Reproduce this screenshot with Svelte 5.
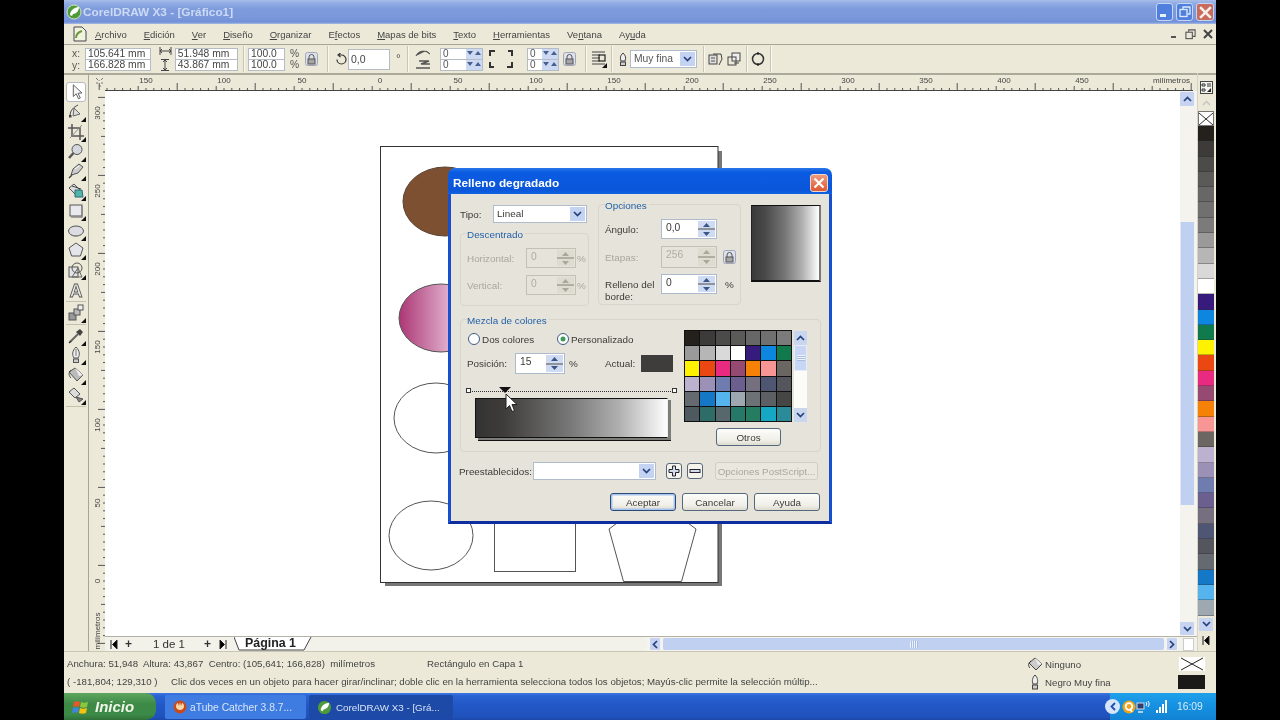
<script>
  const menu = [['A','rchivo'],['E','dición'],['V','er'],['D','iseño'],['O','rganizar'],['E','f','ectos'],['M','apas de bits'],['T','exto'],['H','erramientas'],['Ve','n','tana'],['Ay','u','da']];
  const tools = [
    {s:'<path d="M7 2v13l3.2-3 2.6 5.6 2-1-2.500-5.200 4.300-.3z" fill="#f6f6f6" stroke="#555"/>',a:1},
    {s:'<path d="M4 14C4 8 8 5 12 3" fill="none" stroke="#444"/><path d="M8 6l-1 8 7-2z" fill="#ddd" stroke="#666"/><rect x="3" y="13" width="2.500" height="2.500" fill="#444"/>',f:1},
    {s:'<path d="M6 2v12h12M2 6h12v12" fill="none" stroke="#555" stroke-width="1.500"/><path d="M4 16L16 3" stroke="#888"/>',f:1},
    {s:'<circle cx="11" cy="7.500" r="5" fill="#d4d7de" stroke="#555"/><path d="M7.500 11l-4.500 5" stroke="#555" stroke-width="2.400"/>',f:1},
    {s:'<path d="M5 14l2-6 6-5 4 3-5 6z" fill="#ccc" stroke="#555"/><path d="M3 17l3-3" stroke="#444" stroke-width="1.500"/><path d="M9 8l4-3" stroke="#fff"/>',f:1},
    {s:'<path d="M3 7l5-4 6 6-5 4z" fill="#ddd" stroke="#555"/><path d="M9 9l7 0 1 7-8 0z" fill="#4fb6a8" stroke="#367"/><path d="M6 5l9 3" stroke="#444"/>',f:1},
    {s:'<rect x="4" y="4" width="12" height="11" fill="#e8e8ee" stroke="#555"/><path d="M16 5v11H5" stroke="#888" fill="none" stroke-width="1.400"/>',f:1},
    {s:'<ellipse cx="10" cy="10" rx="7.500" ry="5" fill="#dcdce4" stroke="#555"/><path d="M5 14c4 2 9 1 12-2" stroke="#888" fill="none"/>',f:1},
    {s:'<path d="M10 3l7 5-2.600 8H5.600L3 8z" fill="#e4e4ea" stroke="#555"/>',f:1},
    {s:'<rect x="3" y="7" width="9" height="10" fill="#e4e4e4" stroke="#555"/><circle cx="11" cy="8" r="5" fill="none" stroke="#555"/><path d="M6 17l6-9 4 9z" fill="none" stroke="#666"/>',f:1},
    {s:'<text x="10" y="17" text-anchor="middle" font-family="Liberation Sans" font-weight="bold" font-size="18" fill="#e8e8e8" stroke="#555" stroke-width=".8">A</text>'},
    {s:'<rect x="3" y="10" width="7" height="7" fill="#999" stroke="#555"/><rect x="8" y="6" width="6" height="6" fill="#bbb" stroke="#555"/><rect x="12" y="2" width="5" height="5" fill="#eee" stroke="#555"/>',f:1},
    {s:'<path d="M4 16l8-8" stroke="#666" stroke-width="2"/><path d="M10 6l4-3 3 3-3 4z" fill="#444"/><path d="M3 17l2-2" stroke="#333" stroke-width="1.500"/>',f:1},
    {s:'<path d="M10 2c4 4 4 8 2 11H8C6 10 6 6 10 2z" fill="#eee" stroke="#555"/><path d="M10 4v7" stroke="#777"/><rect x="7.500" y="14" width="5" height="3.500" fill="#ccc" stroke="#555"/>',f:1},
    {s:'<path d="M3 7l6-4 8 7-6 6z" fill="#bbb" stroke="#555"/><path d="M5 5C2 8 3 11 5 13" stroke="#444" fill="none"/><path d="M9 3l8 7-4 1z" fill="#eee"/>',f:1},
    {s:'<path d="M3 7l5-4 6 6-5 4z" fill="#ddd" stroke="#555"/><path d="M10 12l7 2-4 3z" fill="#888" stroke="#555"/>',f:1},
  ];
  const sepAfter = [10, 11, 15];
  const swatches = ['#24211d','#3c3b39','#4b4b4a','#5a5a59','#676767','#707070','#7b7b7b','#9a9a9a','#b6b6b6','#d9d9d9','#ffffff','#361a7c','#0d86e0','#107a4c','#fff200','#ea4712','#e82a80','#964a72','#f58206','#f89696','#6b6661','#bcb2d0','#9b91b6','#6f7cb0','#6b5f90','#74707f','#4f5674','#55555e','#646a70','#1578c6','#55b4ee','#9ea8b0','#6d7276','#5c6064','#464644','#4e5a60','#2e6c68','#56686c','#267868','#267c60','#14a8c4','#2a8a98'];
  const side = swatches.slice(0, 32);
  const hmarks = [];
  for (let v = -150; v <= 450; v += 50) hmarks.push(v);
  const hticks = [];
  for (let x = 380 - 7.8 * 36; x < 1193; x += 7.8) hticks.push(x);
  const vmarks = [300,250,200,150,100,50,0];
  const vticks = [];
  for (let y = 581 - 7.8 * 62; y < 651; y += 7.8) vticks.push(y);
  const tickLen = (i) => i % 10 === 0 ? 7 : i % 5 === 0 ? 4 : 2;
</script>

{#snippet chev(up, color = '#26407c')}
  <svg class="chev" viewBox="0 0 9 6" width="9" height="6"><path d={up ? 'M1 5l3.500-3.500L8 5' : 'M1 1l3.500 3.500L8 1'} fill="none" stroke={color} stroke-width="1.700"/></svg>
{/snippet}
{#snippet side_chev(left)}
  <svg class="chev" viewBox="0 0 6 9" width="6" height="9"><path d={left ? 'M5 1L1.500 4.500 5 8' : 'M1 1l3.500 3.500L1 8'} fill="none" stroke="#26407c" stroke-width="1.700"/></svg>
{/snippet}
{#snippet spin(val, cls = '')}
  <div class="spin {cls}">
    <span class="val">{val}</span>
    <span class="arrows">
      <span class="ar"><svg viewBox="0 0 7 4" width="7" height="4"><path d="M3.500 0L7 4H0z"/></svg></span>
      <span class="ar"><svg viewBox="0 0 7 4" width="7" height="4"><path d="M0 0h7L3.500 4z"/></svg></span>
    </span>
  </div>
{/snippet}
{#snippet mini(val)}
  <div class="mini"><span>{val}</span><span class="ma"><svg viewBox="0 0 16 5" width="16" height="5"><path d="M1 0h6L4 4zM9 4l3-4 3 4z" fill="#4a5f90"/></svg></span></div>
{/snippet}
{#snippet lock()}
  <svg class="lock" viewBox="0 0 13 14" width="13" height="14"><rect x=".5" y=".5" width="12" height="13" rx="2" fill="#dfe1ea" stroke="#a0a7b8"/><path d="M4 7V5a2.500 2.500 0 015 0v2" fill="none" stroke="#555"/><rect x="3" y="7" width="7" height="5" fill="#a6a6a6" stroke="#555"/></svg>
{/snippet}
{#snippet group_label(t)}
  <span class="legend">{t}</span>
{/snippet}

<div class="screen">
  <div class="desk">
    <header class="title">
      <svg class="logo" viewBox="0 0 16 16" width="16" height="16"><circle cx="8" cy="8" r="7" fill="#4f9a3a"/><circle cx="8" cy="8" r="7" fill="none" stroke="#d5e6b5"/><path d="M4 11C4 7 8 3 13 3c0 4-3 7-6 7l-1 2z" fill="#fff"/></svg>
      <span class="title-text">CorelDRAW X3 - [Gráfico1]</span>
      <span class="wbtns">
        <span class="wb"><i class="min"></i></span>
        <span class="wb"><svg viewBox="0 0 12 12" width="12" height="12"><rect x="1" y="3.500" width="7" height="7" fill="none" stroke="#dfe8fa" stroke-width="1.300"/><path d="M4 3V1h7v7H8.500" fill="none" stroke="#dfe8fa" stroke-width="1.300"/></svg></span>
        <span class="wb close"><svg viewBox="0 0 12 12" width="13" height="13"><path d="M1 1l10 10M11 1L1 11" stroke="#f6eee8" stroke-width="2.400"/></svg></span>
      </span>
    </header>

    <nav class="menu">
      <svg class="doc" viewBox="0 0 14 16" width="14" height="16"><path d="M1 1h8l4 4v10H1z" fill="#f2f3dc" stroke="#445"/><path d="M3 12c0-4 3-6 6-7" stroke="#6a9a40" fill="none" stroke-width="2"/></svg>
      {#each menu as m}
        <span class="mi">{#if m[2]}{m[0]}<u>{m[1]}</u>{m[2]}{:else}<u>{m[0]}</u>{m[1]}{/if}</span>
      {/each}
      <span class="mdi">
        <i class="mdmin"></i>
        <svg viewBox="0 0 12 12" width="11" height="11"><rect x="1" y="3.500" width="7" height="7" fill="none" stroke="#555" stroke-width="1.200"/><path d="M4 3V1h7v7H8.500" fill="none" stroke="#555" stroke-width="1.200"/></svg>
        <svg viewBox="0 0 10 10" width="10" height="10"><path d="M1 1l8 8M9 1L1 9" stroke="#444" stroke-width="2"/></svg>
      </span>
    </nav>

    <div class="prop">
      <div class="g g1">
        <div class="xy"><span>x:</span><span class="inp tall">105.641 mm</span><span>y:</span><span class="inp tall">166.828 mm</span></div>
        <div class="dims">
          <svg viewBox="0 0 13 8" width="13" height="8"><path d="M1 0v8M12 0v8M1 4h11M3 2L1 4l2 2M10 2l2 2-2 2" stroke="#444" fill="none"/></svg>
          <svg viewBox="0 0 8 12" width="8" height="12"><path d="M0 .5h8M0 11.500h8M4 0v12M2 3l2-2 2 2M2 9l2 2 2-2" stroke="#444" fill="none"/></svg>
        </div>
        <div class="stack w67"><span class="inp tall">51.948 mm</span><span class="inp tall">43.867 mm</span></div>
      </div>
      <i class="sep s1"></i>
      <div class="g g2">
        <div class="stack w38"><span class="inp tall">100.0</span><span class="inp tall">100.0</span></div>
        <div class="pct"><span>%</span><span>%</span></div>
        <span class="lockw">{@render lock()}</span>
      </div>
      <i class="sep s2"></i>
      <div class="g g3">
        <svg viewBox="0 0 12 12" width="12" height="12"><path d="M2 6.500a4.500 4.500 0 104.500-4.500H4M5.500 0L3 2l2.500 2" fill="none" stroke="#333" stroke-width="1.200"/></svg>
        <span class="inp angle">0,0</span>
        <span class="deg">°</span>
      </div>
      <i class="sep s3"></i>
      <div class="g g4">
        <div class="mirror">
          <svg viewBox="0 0 16 8" width="16" height="8"><path d="M1 7C3 2 10 0 15 5l-4-3" fill="#555" stroke="#555"/></svg>
          <svg viewBox="0 0 16 9" width="16" height="9"><path d="M4 1h10L6 4h9M1 8h14" fill="none" stroke="#555" stroke-width="1.500"/></svg>
        </div>
        <div class="stack w43">{@render mini('0')}{@render mini('0')}</div>
      </div>
      <div class="g g5">
        <svg viewBox="0 0 24 18" width="24" height="18"><path d="M1 6V1h5M23 6V1h-4M1 12v5h4M23 12v5h-5" fill="none" stroke="#333" stroke-width="2"/></svg>
      </div>
      <div class="g g6">
        <div class="stack w43">{@render mini('0')}{@render mini('0')}</div>
        <span class="lockw2">{@render lock()}</span>
      </div>
      <i class="sep s4"></i>
      <div class="g g7">
        <svg viewBox="0 0 16 18" width="16" height="18"><path d="M1 2h13M1 5h8M1 8h8M1 11h8M1 14h13" stroke="#444"/><rect x="8" y="5" width="6" height="6" fill="none" stroke="#222" stroke-width="1.200"/><path d="M16 18h-5l5-5z" fill="#111"/></svg>
      </div>
      <i class="sep s5"></i>
      <div class="g g8">
        <svg viewBox="0 0 8 14" width="8" height="14"><path d="M4 1c3 3 3 5 2 8H2C1 6 1 4 4 1z" fill="#eee" stroke="#444"/><rect x="1.500" y="10" width="5" height="3.500" fill="#ccc" stroke="#444"/></svg>
        <div class="combo pen"><span class="ctext">Muy fina</span><span class="cbtn">{@render chev(false)}</span></div>
      </div>
      <i class="sep s6"></i>
      <div class="g g9">
        <svg viewBox="0 0 15 14" width="15" height="14"><rect x="1" y="3" width="8" height="9" fill="#ddd" stroke="#444"/><path d="M5 2h8l1 5-3 6" fill="none" stroke="#444"/><path d="M3 6h4M3 9h4" stroke="#555"/></svg>
        <svg viewBox="0 0 15 14" width="15" height="14"><rect x="5" y="1" width="8" height="8" fill="#eee" stroke="#444"/><rect x="1" y="5" width="8" height="8" fill="none" stroke="#444"/><path d="M7 11h5" stroke="#444"/></svg>
      </div>
      <i class="sep s7"></i>
      <div class="g g10">
        <svg viewBox="0 0 14 14" width="14" height="14"><circle cx="7" cy="7" r="5.500" fill="none" stroke="#333" stroke-width="1.500"/><circle cx="7" cy="1.500" r="1.200" fill="#222"/><circle cx="7" cy="12.500" r="1.200" fill="#222"/></svg>
      </div>
      <i class="sep s8"></i>
    </div>

    <div class="work">
      <aside class="tools">
        {#each tools as t, i}
          <div class="tool" class:active={t.a}>
            <svg viewBox="0 0 20 20" width="20" height="20">{@html t.s}{#if t.f}<path d="M20 20h-5l5-5z" fill="#111"/>{/if}</svg>
          </div>
          {#if sepAfter.includes(i)}<hr class="tsep"/>{/if}
        {/each}
      </aside>

      <div class="center">
        <svg class="hruler" viewBox="89 73 1108 18" width="1108" height="18">
          <path d="M99 80v1M96 83h2M101 83h2M100 85v2M96 78l2 2M103 78l-2 2" stroke="#777"/>
          {#each hticks as x, i}
            <line x1={x} x2={x} y1={90 - tickLen(i)} y2="90" stroke="#555"/>
          {/each}
          <line x1="105" x2="1193" y1="90.500" y2="90.500" stroke="#444"/>
          {#each hmarks as v}
            {#if 380 + v * 1.56 > 110 && 380 + v * 1.56 < 1150}
              <text class="rt" x={380 + v * 1.56} y="83" text-anchor="middle">{Math.abs(v)}</text>
            {/if}
          {/each}
          <text class="rt" x="1153" y="83">milímetros</text>
        </svg>

        <div class="mid">
          <svg class="vruler" viewBox="89 91 16 560" width="16" height="560">
            {#each vticks as y, i}
              {#if y > 91}<line x1={105 - tickLen(i)} x2="105" y1={y} y2={y} stroke="#555"/>{/if}
            {/each}
            <line x1="105.500" x2="105.500" y1="91" y2="636" stroke="#444"/>
            {#each vmarks as v}
              <text class="rt" transform="translate(100 {581 - v * 1.56}) rotate(-90)" text-anchor="middle">{v}</text>
            {/each}
            <text class="rt" transform="translate(100 631) rotate(-90)" text-anchor="middle">milímetros</text>
          </svg>

          <div class="right">
            <div class="canvasrow">
              <div class="canvas">
                <svg viewBox="105 91 1075 545" width="1075" height="545">
                  <defs>
                    <linearGradient id="pk" x1="0" x2="1"><stop offset="0" stop-color="#ac3674"/><stop offset=".55" stop-color="#dba5c6"/><stop offset="1" stop-color="#fff"/></linearGradient>
                  </defs>
                  <rect x="385" y="151" width="337" height="435" fill="#777"/>
                  <rect x="380.500" y="146.500" width="337.500" height="436" fill="#fff" stroke="#333"/>
                  <ellipse cx="445" cy="201.500" rx="42" ry="34.500" fill="#7c5030" stroke="#5a4030"/>
                  <ellipse cx="441" cy="318" rx="42" ry="34" fill="url(#pk)" stroke="#555"/>
                  <ellipse cx="436" cy="418" rx="42" ry="35" fill="#fff" stroke="#555"/>
                  <ellipse cx="431" cy="535.500" rx="42" ry="34.500" fill="#fff" stroke="#555"/>
                  <rect x="494.500" y="504.500" width="81" height="67" fill="#fff" stroke="#555"/>
                  <path d="M652.500 497L696 529 681.500 581.500H623.500L609 529z" fill="#fff" stroke="#555"/>
                </svg>
              </div>
              <div class="vscroll">
                <span class="sbtn up1">{@render chev(true)}</span>
                <span class="vthumb"></span>
                <span class="sbtn down1">{@render chev(false)}</span>
              </div>
            </div>
            <div class="tabs">
              <div class="pager">
                <svg class="pg p1" viewBox="0 0 8 9" width="8" height="9"><path d="M1 0v9M7 0v9L2.500 4.500z" stroke="#222"/></svg>
                <b class="plus">+</b>
                <span class="count">1 de 1</span>
                <b class="plus p2">+</b>
                <svg class="pg p3" viewBox="0 0 8 9" width="8" height="9"><path d="M7 0v9M1 0v9l4.500-4.500z" stroke="#222"/></svg>
                <span class="tab">
                  <svg viewBox="0 0 78 14" width="78" height="14"><path d="M0 0l5 13h65L77 0" fill="#fff" stroke="#444"/></svg>
                  <b>Página 1</b>
                </span>
              </div>
              <div class="hscroll">
                <span class="sbtn hb">{@render side_chev(true)}</span>
                <span class="hthumb"><i></i></span>
                <span class="sbtn hb">{@render side_chev(false)}</span>
              </div>
              <div class="corner"><i></i></div>
            </div>
          </div>
        </div>
      </div>

      <aside class="palette">
        <svg class="palicon" viewBox="0 0 13 13" width="13" height="13"><rect x=".5" y=".5" width="12" height="12" fill="#f4f4f0" stroke="#444"/><path d="M2 3h3v2H2zM2 8h3v2H2zM7 3h4M7 5h4" fill="none" stroke="#333"/><path d="M7 11h4V7z" fill="#222"/></svg>
        <span class="palup">{@render chev(true, '#c9c9c4')}</span>
        <div class="nofill"><svg viewBox="0 0 14 12" width="14" height="12"><path d="M0 0l14 12M14 0L0 12" stroke="#333"/></svg></div>
        <div class="strip">
          {#each side as c}<span class="sw" style="background:{c}"></span>{/each}
        </div>
        <span class="paldown">{@render chev(false)}</span>
        <svg class="palend" viewBox="0 0 8 9" width="8" height="9"><path d="M1 0v9M7 0v9L2.500 4.500z" stroke="#222"/></svg>
      </aside>
    </div>

    <footer class="status">
      <div class="slines">
        <div class="sline"><span class="sa">Anchura: 51,948&nbsp; Altura: 43,867&nbsp; Centro: (105,641; 166,828)&nbsp; milímetros</span><span>Rectángulo en Capa 1</span></div>
        <div class="sline"><span class="sb">( -181,804; 129,310 )</span><span>Clic dos veces en un objeto para hacer girar/inclinar; doble clic en la herramienta selecciona todos los objetos; Mayús-clic permite la selección múltip...</span></div>
      </div>
      <div class="sfill">
        <div class="sfr">
          <svg viewBox="0 0 16 14" width="16" height="14"><path d="M2 6l6-5 7 6-6 6z" fill="#ccc" stroke="#444"/><path d="M4 4C1 6 1 9 3 11" fill="none" stroke="#333"/><path d="M8 1l7 6-4 1z" fill="#eee"/></svg>
          <span>Ninguno</span>
        </div>
        <div class="sfr">
          <svg viewBox="0 0 16 16" width="16" height="16"><path d="M8 1c3 3 3 6 2 9H6C5 7 5 4 8 1z" fill="#eee" stroke="#444"/><rect x="5.500" y="11" width="5" height="4" fill="#ccc" stroke="#444"/></svg>
          <span>Negro Muy fina</span>
        </div>
      </div>
      <div class="sswatch">
        <div class="fillbox"><svg viewBox="0 0 26 14" width="26" height="14"><path d="M2 1l22 12M24 1L2 13" stroke="#222"/></svg></div>
        <div class="penbox"></div>
      </div>
    </footer>

    <div class="taskbar">
      <div class="start">
        <svg viewBox="0 0 18 16" width="18" height="16"><path d="M2 3c2-1 4-1 6 0l-1 5c-2-1-4-1-6 0z" fill="#e8562a"/><path d="M9 3c2 1 4 1 7 0l-1 5c-2 1-5 1-7 0z" fill="#8cc63f"/><path d="M1 9c2-1 4-1 6 0l-1 5c-2-1-4-1-6 0z" fill="#3f86e0"/><path d="M8 9c2 1 4 1 7 0l-1 5c-2 1-5 1-7 0z" fill="#f4c20d"/></svg>
        <span>Inicio</span>
      </div>
      <div class="tbtn t1">
        <svg viewBox="0 0 14 14" width="14" height="14"><circle cx="7" cy="7" r="6.500" fill="#c84a1c"/><path d="M3 7c0-3 1-4 2-4l1 3 1-4 1 4 1-3c1 0 2 1 2 4-1 4-7 4-8 0z" fill="#f8d8a8"/></svg>
        <span>aTube Catcher 3.8.7...</span>
      </div>
      <div class="tbtn t2">
        <svg viewBox="0 0 16 16" width="15" height="15"><circle cx="8" cy="8" r="7" fill="#4f9a3a"/><path d="M4 11C4 7 8 3 13 3c0 4-3 7-6 7l-1 2z" fill="#fff"/></svg>
        <span>CorelDRAW X3 - [Grá...</span>
      </div>
      <div class="tray">
        <span class="tchev"><svg viewBox="0 0 6 9" width="6" height="9"><path d="M5 1L1.500 4.500 5 8" fill="none" stroke="#1c4fb0" stroke-width="1.800"/></svg></span>
        <svg class="tq" viewBox="0 0 14 14" width="14" height="14"><circle cx="7" cy="7" r="6.500" fill="#f2a31c"/><circle cx="7" cy="6.500" r="3.300" fill="none" stroke="#fff" stroke-width="1.800"/><path d="M8 9l2 3" stroke="#fff" stroke-width="1.600"/></svg>
        <svg class="tm" viewBox="0 0 14 14" width="14" height="14"><rect x="1" y="3" width="7" height="6" fill="#2e3f6c" stroke="#cfd9ee"/><path d="M2 12h5" stroke="#dfe6f4" stroke-width="1.500"/><path d="M10 2c1 1 1 3 0 4M12 1c1.500 2 1.500 4 0 6" stroke="#fff" fill="none"/></svg>
        <svg class="ts" viewBox="0 0 13 15" width="13" height="15"><path d="M1 11v3M4 8v6M7 5v9M10 1v13" stroke="#fff" stroke-width="2"/></svg>
        <span class="clock">16:09</span>
      </div>
    </div>

    <section class="dlg">
      <div class="dtitle">
        <span>Relleno degradado</span>
        <span class="dclose"><svg viewBox="0 0 12 12" width="12" height="12"><path d="M1.500 1.500l9 9M10.500 1.500l-9 9" stroke="#fff" stroke-width="2.200"/></svg></span>
      </div>
      <div class="dbody">
        <div class="dtop">
          <div class="lcol">
            <div class="tipo">
              <span class="tlab">Tipo:</span>
              <div class="combo ctipo"><span class="ctext">Lineal</span><span class="cbtn">{@render chev(false)}</span></div>
            </div>
            <div class="gbox desc">
              {@render group_label('Descentrado')}
              <div class="dr"><span class="dl">Horizontal:</span>{@render spin('0', 'off w50')}<span class="dp">%</span></div>
              <div class="dr"><span class="dl">Vertical:</span>{@render spin('0', 'off w50')}<span class="dp">%</span></div>
            </div>
          </div>
          <div class="gbox opts">
            {@render group_label('Opciones')}
            <div class="or o1"><span class="ol">Ángulo:</span>{@render spin('0,0', 'w56')}</div>
            <div class="or o2"><span class="ol dis">Etapas:</span>{@render spin('256', 'off w56 h22')}<span class="olock">{@render lock()}</span></div>
            <div class="or o3"><span class="ol two">Relleno del borde:</span>{@render spin('0', 'w56')}<span class="op">%</span></div>
          </div>
          <div class="preview"></div>
        </div>

        <div class="gbox mix">
          {@render group_label('Mezcla de colores')}
          <div class="mleft">
            <div class="radios">
              <span class="rad r1"><svg viewBox="0 0 12 12" width="12" height="12"><circle cx="6" cy="6" r="5.500" fill="#fff" stroke="#3c5a80"/></svg>Dos colores</span>
              <span class="rad"><svg viewBox="0 0 12 12" width="12" height="12"><circle cx="6" cy="6" r="5.500" fill="#fff" stroke="#3c5a80"/><circle cx="6" cy="6" r="2.500" fill="#3f9a5a"/></svg>Personalizado</span>
            </div>
            <div class="posr">
              <span class="pl">Posición:</span>
              {@render spin('15', 'w50 h21')}
              <span class="pp">%</span>
              <span class="al">Actual:</span>
              <span class="cur"></span>
            </div>
            <div class="marker"><i class="mk l"></i><i class="mk r"></i><svg class="tri" viewBox="0 0 12 6" width="12" height="6"><path d="M0 0h12L6 6z" fill="#111"/></svg></div>
            <div class="bar"></div>
            <svg class="cursor" viewBox="0 0 13 20" width="13" height="20"><path d="M1 1v15l3.500-3.500 2.500 6 2.500-1-2.500-6H12z" fill="#fff" stroke="#222"/></svg>
          </div>
          <div class="mright">
            <div class="grid-wrap">
              <div class="cgrid">
                {#each swatches as c}<span class="cell" style="background:{c}"></span>{/each}
              </div>
              <div class="gscroll">
                <span class="gb">{@render chev(true)}</span>
                <span class="gthumb"><i></i></span>
                <span class="gfill"></span>
                <span class="gb">{@render chev(false)}</span>
              </div>
            </div>
            <button class="btn otros">Otros</button>
          </div>
        </div>

        <div class="preset">
          <span class="prl">Preestablecidos:</span>
          <div class="combo cpre"><span class="ctext"></span><span class="cbtn">{@render chev(false)}</span></div>
          <span class="sq first"><svg viewBox="0 0 12 12" width="12" height="12"><path d="M4.500 1h3v3.500H11v3H7.500V11h-3V7.500H1v-3h3.500z" fill="#d5dcea" stroke="#223"/></svg></span>
          <span class="sq"><svg viewBox="0 0 12 12" width="12" height="12"><rect x="1" y="4.500" width="10" height="3" fill="#d5dcea" stroke="#223"/></svg></span>
          <button class="btn ps" disabled>Opciones PostScript...</button>
        </div>

        <div class="actions">
          <button class="btn def">Aceptar</button>
          <button class="btn">Cancelar</button>
          <button class="btn">Ayuda</button>
        </div>
      </div>
    </section>
  </div>
</div>

<style>
  :global(body) { margin: 0; background: #000; }
  .screen { width: 1280px; height: 720px; background: #000; display: flex; justify-content: center; overflow: hidden; }
  .desk { position: relative; width: 1152px; height: 720px; display: flex; flex-direction: column; background: #ece9d8; font: 10px "Liberation Sans", sans-serif; color: #333; filter: blur(.35px); }

  .title { height: 24px; flex: none; display: flex; align-items: center; padding-left: 2px; box-sizing: border-box; background: linear-gradient(#a9bfe9 0, #92ade4 3px, #7e9bdd 9px, #7a97db 18px, #7090d8 22px, #a9bbe4 24px); }
  .logo { flex: none; }
  .title-text { margin-left: 1px; font: bold 11.800px "Liberation Sans", sans-serif; color: #ccdaf3; }
  .wbtns { margin-left: auto; display: flex; gap: 3px; margin-right: 2px; }
  .wb { width: 17px; height: 18px; border-radius: 3px; background: #4f80dd; border: 1px solid #c6d6f2; box-sizing: border-box; display: flex; align-items: center; justify-content: center; position: relative; }
  .min { position: absolute; left: 3px; bottom: 3px; width: 6px; height: 3px; background: #e8f0fc; }
  .close { width: 18px; background: #c86a5c; }

  .menu { height: 21px; flex: none; box-sizing: border-box; border-bottom: 1px solid #a7a597; display: flex; align-items: center; padding-left: 9px; gap: 17px; font-size: 9.500px; color: #444; }
  .doc { margin-right: -9px; flex: none; }
  .mdi { margin-left: auto; display: flex; align-items: center; gap: 7px; margin-right: 3px; }
  .mdmin { width: 5px; height: 2px; background: #555; margin-top: 6px; margin-right: 2px; }

  .prop { height: 28px; flex: none; box-sizing: border-box; display: flex; align-items: center; padding-left: 8px; font-size: 10.300px; color: #555; }
  .g { display: flex; align-items: center; flex: none; }
  .sep { flex: none; width: 1px; height: 26px; background: #c9c6b6; box-shadow: 1px 0 0 #f8f7f0; }
  .g1 { width: 166px; }
  .s1 { margin-left: 5px; }
  .g2 { width: 70px; margin-left: 4px; }
  .s2 { margin-left: 9px; }
  .g3 { width: 68px; margin-left: 7px; }
  .s3 { margin-left: 4px; }
  .g4 { width: 68px; margin-left: 7px; }
  .g5 { width: 24px; margin-left: 6px; }
  .g6 { width: 58px; margin-left: 5px; }
  .s4 { margin-left: 9px; }
  .g7 { width: 16px; margin-left: 5px; }
  .s5 { margin-left: 4px; }
  .g8 { width: 78px; margin-left: 7px; }
  .s6 { margin-left: 6px; }
  .g9 { width: 34px; margin-left: 4px; justify-content: space-between; }
  .s7 { margin-left: 4px; }
  .g10 { width: 14px; margin-left: 4px; }
  .s8 { margin-left: 5px; }

  .xy { display: grid; grid-template-columns: 13px 66px; width: 79px; align-items: center; }
  .dims { width: 20px; margin-left: 5px; display: flex; flex-direction: column; align-items: center; gap: 4px; }
  .stack { display: flex; flex-direction: column; }
  .w67 { width: 67px; }
  .w38 { width: 38px; }
  .w43 { width: 43px; margin-left: 9px; }
  .inp { background: #fff; border: 1px solid #b6bcc6; box-sizing: border-box; color: #444; display: block; }
  .tall { height: 12px; line-height: 10px; padding-left: 2px; font-size: 10.300px; overflow: hidden; }
  .tall + .tall, .xy .tall:last-child { margin-top: -1px; }
  .pct { display: flex; flex-direction: column; margin-left: 5px; width: 9px; line-height: 11px; }
  .lockw { margin-left: 6px; display: flex; }
  .angle { width: 42px; height: 21px; line-height: 19px; margin-left: 1px; padding-left: 2px; font-size: 10.500px; }
  .deg { margin-left: 6px; font-size: 12px; }
  .mirror { display: flex; flex-direction: column; gap: 3px; width: 16px; }
  .mini { height: 12px; background: #fff; border: 1px solid #b6bcc6; box-sizing: border-box; display: flex; justify-content: space-between; align-items: center; line-height: 10px; padding: 0 0 0 2px; font-size: 10px; }
  .mini + .mini { margin-top: -1px; }
  .ma { display: flex; align-items: center; height: 10px; background: #ccd9f2; }
  .lockw2 { margin-left: 4px; display: flex; }

  .combo { display: flex; align-items: stretch; background: #fff; border: 1px solid #b0bccc; box-sizing: border-box; height: 18px; }
  .ctext { flex: 1; padding-left: 3px; line-height: 16px; }
  .cbtn { width: 15px; flex: none; background: #c3d3f1; display: flex; align-items: center; justify-content: center; margin: 1px; }
  .pen { width: 67px; margin-left: 3px; font-size: 10.300px; color: #555; }

  .work { flex: 1; display: flex; min-height: 0; box-shadow: inset 0 2px #aba999; }
  .tools { width: 25px; flex: none; box-sizing: border-box; border-right: 1px solid #a7a597; padding-top: 9px; }
  .tool { height: 19.800px; width: 24px; display: flex; align-items: center; justify-content: center; box-sizing: border-box; }
  .tool.active { background: #fff; border: 1px solid #b9b9c2; border-radius: 3px; margin: 0 2px; width: 20px; height: 20px; }
  .tsep { border: 0; height: 1px; background: #c4c1b0; margin: 1px 2px; }

  .center { flex: 1; display: flex; flex-direction: column; min-width: 0; }
  .hruler { display: block; flex: none; }
  .rt { font: 8px "Liberation Sans", sans-serif; fill: #444; }
  .mid { flex: 1; display: flex; min-height: 0; }
  .vruler { display: block; flex: none; }
  .right { flex: 1; display: flex; flex-direction: column; min-width: 0; }
  .canvasrow { height: 545px; display: flex; flex: none; }
  .canvas { width: 1075px; background: #fff; flex: none; }
  .canvas svg { display: block; }
  .vscroll { width: 17px; flex: none; background: #f4f3ee; display: flex; flex-direction: column; box-sizing: border-box; padding: 1px 3px 1px 0; }
  .sbtn { background: #c6d4f2; display: flex; align-items: center; justify-content: center; flex: none; border-radius: 1px; }
  .up1 { height: 14px; }
  .vthumb { margin-top: 116px; height: 283px; flex: none; background: #c0d0f0; box-shadow: inset 1px 0 #dfe7f8; }
  .down1 { height: 13px; margin-top: auto; }

  .tabs { height: 15px; flex: none; display: flex; background: #f3f2ea; border-top: 1px solid #b4b2a5; box-sizing: border-box; }
  .pager { width: 541px; flex: none; display: flex; align-items: center; padding-left: 5px; box-sizing: border-box; font-size: 11px; color: #333; }
  .pg { flex: none; }
  .plus { margin-left: 7px; font-size: 12px; line-height: 12px; width: 9px; }
  .count { margin-left: 19px; font-size: 11.500px; width: 42px; }
  .p2 { margin-left: 9px; }
  .p3 { margin-left: 6px; }
  .tab { position: relative; margin-left: 7px; width: 78px; height: 14px; display: flex; align-items: center; }
  .tab svg { position: absolute; left: 0; top: 0; }
  .tab b { position: relative; margin: -2px 0 0 11px; font-size: 12.400px; color: #222; }
  .hscroll { width: 534px; flex: none; display: flex; gap: 3px; padding: 1px 3px 1px 4px; box-sizing: border-box; background: #f4f3ee; }
  .hb { width: 10px; }
  .hthumb { flex: 1; background: #c0d0f0; display: flex; align-items: center; justify-content: center; border-radius: 2px; }
  .hthumb i { width: 8px; height: 7px; background: repeating-linear-gradient(90deg, #eef3fc 0 1px, #a9bce4 1px 2px); }
  .corner { flex: 1; display: flex; align-items: center; justify-content: center; }
  .corner i { width: 9px; height: 11px; background: #fff; border: 1px solid #ccc; }

  .palette { width: 19px; flex: none; display: flex; flex-direction: column; align-items: center; box-sizing: border-box; padding-top: 8px; padding-right: 2px; border-left: 1px solid #d6d3c6; }
  .palicon { flex: none; }
  .palup { height: 10px; margin-top: 4px; display: flex; align-items: center; }
  .nofill { margin-top: 3px; width: 16px; height: 15px; background: #fff; border: 1px solid #777; box-sizing: border-box; display: flex; align-items: center; justify-content: center; flex: none; }
  .strip { display: flex; flex-direction: column; width: 16px; flex: none; }
  .sw { height: 15.300px; box-sizing: border-box; border-bottom: 1px solid #2a2a2a55; display: block; }
  .paldown { margin-top: 2px; width: 14px; height: 13px; background: #c6d4f2; display: flex; align-items: center; justify-content: center; flex: none; }
  .palend { margin-top: 5px; flex: none; }

  .status { height: 42px; flex: none; display: flex; box-sizing: border-box; border-top: 1px solid #c9c6b6; padding: 3px 0 0 3px; font-size: 9.700px; color: #444; }
  .slines { flex: 1; min-width: 0; }
  .sline { height: 18px; line-height: 17px; display: flex; white-space: nowrap; }
  .sa { width: 360px; flex: none; }
  .sb { width: 104px; flex: none; }
  .sfill { width: 152px; flex: none; }
  .sfr { height: 18px; display: flex; align-items: center; gap: 2px; }
  .sswatch { width: 37px; flex: none; display: flex; flex-direction: column; gap: 4px; margin-top: 2px; }
  .fillbox { width: 26px; height: 14px; background: #fff; display: flex; }
  .penbox { width: 27px; height: 14px; margin-left: -1px; background: #1c1a18; }

  .taskbar { height: 27px; flex: none; display: flex; align-items: stretch; background: linear-gradient(#3a78e4 0, #2a63d2 3px, #2257c6 12px, #2052bc 24px, #1a48a8 27px); color: #d8e4f6; font-size: 10.300px; }
  .start { width: 92px; flex: none; box-sizing: border-box; padding-left: 8px; display: flex; align-items: center; gap: 5px; background: linear-gradient(#5ea660, #3d8a46 40%, #3c8a48 80%, #2f7038); border-radius: 0 10px 10px 0; color: #eef5e8; }
  .start span { font: italic bold 15px "Liberation Sans", sans-serif; }
  .tbtn { display: flex; align-items: center; gap: 4px; margin-top: 2px; margin-bottom: 1px; border-radius: 2px; box-sizing: border-box; flex: none; padding-left: 8px; }
  .t1 { width: 141px; margin-left: 9px; background: #3e7ce2; gap: 3px; }
  .t2 { width: 144px; margin-left: 3px; background: #1c4aa6; font-size: 9.800px; }
  .tray { margin-left: auto; width: 106px; display: flex; align-items: center; background: linear-gradient(#1fa0ea, #1690e0 50%, #1282d4); box-sizing: border-box; }
  .tchev { width: 15px; height: 15px; margin-left: -5px; border-radius: 50%; background: #d6e5f8; display: flex; align-items: center; justify-content: center; flex: none; }
  .tq { margin-left: 2px; flex: none; }
  .tm { flex: none; }
  .ts { margin-left: 6px; flex: none; }
  .clock { margin-left: 8px; color: #d5ecfa; font-size: 10.300px; }

  .dlg { position: absolute; left: 384px; top: 168px; width: 384px; height: 356px; display: flex; flex-direction: column; color: #3a3a36; font-size: 9.900px; }
  .dtitle { height: 26px; flex: none; box-sizing: border-box; border-radius: 7px 7px 0 0; background: linear-gradient(#2a77e8, #0b5ce2 4px, #0a56da 22px, #1262e0); display: flex; align-items: center; padding: 4px 4px 0 5px; color: #fff; font: bold 11.800px "Liberation Sans", sans-serif; }
  .dclose { margin-left: auto; width: 18px; height: 18px; background: linear-gradient(#ee9a7c, #dc5a34); border: 1px solid #f3d6c8; border-radius: 3px; box-sizing: border-box; display: flex; align-items: center; justify-content: center; }
  .dbody { flex: 1; box-sizing: border-box; background: #e6e3da; border: 3px solid #164fd0; border-top: 0; border-bottom-color: #0e2ea0; padding: 10px 8px 0 9px; }
  .dtop { display: flex; align-items: flex-start; }
  .lcol { width: 129px; flex: none; }
  .tipo { display: flex; align-items: center; height: 18px; margin-top: 1px; }
  .tlab { width: 33px; flex: none; }
  .ctipo { width: 94px; }
  .gbox { position: relative; box-sizing: border-box; border: 1px solid #d8d5ca; border-radius: 4px; }
  .legend { position: absolute; top: -5px; left: 6px; padding-right: 2px; background: #e6e3da; color: #1f5fa8; line-height: 12px; }
  .desc { margin-top: 10px; height: 73px; padding: 14px 0 0 6px; color: #aaa79c; }
  .dr { display: flex; align-items: center; height: 20px; margin-bottom: 7px; }
  .dl { width: 59px; flex: none; }
  .dp { margin-left: 1px; }
  .opts { width: 143px; height: 101px; margin-left: 9px; flex: none; padding: 14px 0 0 6px; }
  .or { display: flex; align-items: center; height: 20px; }
  .o2 { margin-top: 7px; height: 22px; }
  .o3 { margin-top: 6px; align-items: flex-start; }
  .ol { width: 56px; flex: none; }
  .dis { color: #aaa79c; }
  .two { line-height: 12px; margin-top: 5px; }
  .olock { margin-left: 6px; display: flex; }
  .op { margin-left: 8px; line-height: 22px; }
  .preview { width: 70px; height: 77px; margin: 1px 0 0 10px; box-sizing: border-box; flex: none; border-style: solid; border-width: 1px 2px 2px 1px; border-color: #111 #777 #111 #222; background: linear-gradient(90deg, #3a3a3a 0, #4a4a4a 20%, #787878 50%, #b0b0b0 75%, #fff 100%); }

  .spin { display: flex; height: 20px; background: #fff; border: 1px solid #aeb9cc; box-sizing: border-box; flex: none; }
  .w50 { width: 50px; }
  .w56 { width: 56px; }
  .h22 { height: 22px; }
  .h21 { height: 21px; }
  .val { flex: 1; padding: 1px 0 0 4px; line-height: 13px; font-size: 10.300px; }
  .arrows { width: 17px; margin: 1px; display: flex; flex-direction: column; gap: 2px; flex: none; background: #8f939c; }
  .ar { flex: 1; background: #cfdbf2; display: flex; align-items: center; justify-content: center; }
  .ar path { fill: #3d5688; }
  .off { background: #e6e3da; border-color: #c3c0b5; color: #b0ada2; }
  .off .arrows { background: #b0ada2; }
  .off .ar { background: #dedbd0; }
  .off .ar path { fill: #a9a69a; }

  .mix { margin-top: 13px; width: 361px; height: 133px; display: flex; }
  .mleft { width: 223px; flex: none; position: relative; padding: 13px 0 0 6px; box-sizing: border-box; }
  .radios { display: flex; height: 12px; padding-left: 1px; }
  .rad { display: flex; align-items: center; gap: 2px; }
  .r1 { width: 89px; }
  .posr { display: flex; align-items: center; height: 21px; margin-top: 8px; }
  .pl { width: 48px; flex: none; }
  .pp { width: 40px; flex: none; padding-left: 4px; box-sizing: border-box; }
  .al { width: 36px; flex: none; }
  .cur { width: 32px; height: 17px; background: #3f3d3b; }
  .marker { position: relative; width: 207px; height: 5px; margin: 14px 0 0 1px; border-bottom: 1px dotted #333; box-sizing: border-box; top: -1px; }
  .mk { position: absolute; top: 1px; width: 5px; height: 5px; background: #fff; border: 1px solid #333; box-sizing: border-box; }
  .mk.l { left: -2px; }
  .mk.r { right: -2px; }
  .tri { position: absolute; left: 31px; top: 0; }
  .bar { width: 193px; height: 40px; box-sizing: border-box; margin: 5px 0 0 8px; border: 1px solid #111; border-right-color: #eee; background: linear-gradient(90deg, #333 0, #3f3d3b 15%, #797979 50%, #b0b0b0 75%, #fdfdfd 100%); box-shadow: 3px 2px 0 #7c7c78, 3px 3px 0 #111; }
  .cursor { position: absolute; left: 44px; top: 73px; }
  .mright { padding: 10px 0 0 0; }
  .grid-wrap { display: flex; gap: 2px; }
  .cgrid { width: 108px; height: 92px; box-sizing: border-box; background: #111; padding: 1px; display: grid; grid-template-columns: repeat(7, 1fr); grid-template-rows: repeat(6, 1fr); gap: 1px; flex: none; }
  .gscroll { width: 13px; height: 91px; margin-top: 1px; background: #fbfbf8; display: flex; flex-direction: column; }
  .gb { height: 14px; background: #c8d6f0; display: flex; align-items: center; justify-content: center; flex: none; }
  .gthumb { height: 26px; background: #c6d6f4; display: flex; align-items: center; justify-content: center; border: 1px solid #e6ecfa; box-sizing: border-box; flex: none; }
  .gthumb i { width: 8px; height: 6px; background: repeating-linear-gradient(#eef3fc 0 1px, #a9bce4 1px 2px); }
  .gfill { flex: 1; }
  .btn { font: inherit; color: inherit; width: 66px; height: 18px; padding: 0; box-sizing: border-box; border: 1px solid #56687c; border-radius: 3px; background: linear-gradient(#fcfcf9, #f0efe8 70%, #dedbcf); }
  .otros { display: block; margin: 6px 0 0 32px; width: 65px; }

  .preset { display: flex; align-items: center; height: 18px; margin: 10px 0 0 -1px; }
  .prl { width: 74px; flex: none; white-space: nowrap; }
  .cpre { width: 123px; }
  .sq { width: 16px; height: 16px; box-sizing: border-box; border: 1px solid #56687c; border-radius: 3px; background: #f4f3ec; margin-left: 5px; display: flex; align-items: center; justify-content: center; }
  .sq.first { margin-left: 10px; }
  .btn.ps { width: 103px; margin-left: 12px; border-color: #d2cfc3; color: #aaa79c; background: #eae7de; }
  .actions { display: flex; justify-content: flex-end; gap: 6px; margin: 13px 1px 0 0; }
  .def { border-color: #2a4a78; box-shadow: inset 0 0 0 1.500px #a8c4ec; }
</style>
